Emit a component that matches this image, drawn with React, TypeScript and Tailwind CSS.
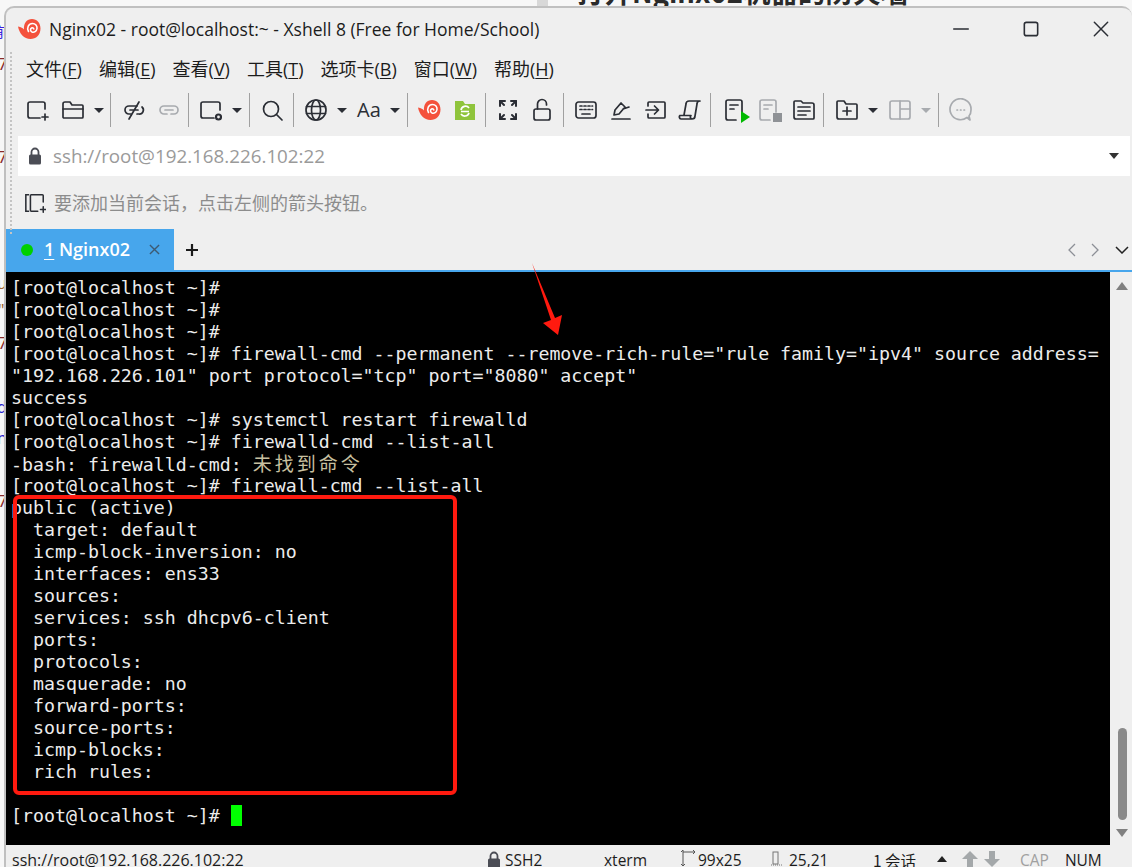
import type { ReactNode } from 'react';

const ui = "font-['Open_Sans','Noto_Sans_CJK_SC',sans-serif]";

const lines: ReactNode[] = [
  '[root@localhost ~]#',
  '[root@localhost ~]#',
  '[root@localhost ~]#',
  '[root@localhost ~]# firewall-cmd --permanent --remove-rich-rule="rule family="ipv4" source address=',
  '"192.168.226.101" port protocol="tcp" port="8080" accept"',
  'success',
  '[root@localhost ~]# systemctl restart firewalld',
  '[root@localhost ~]# firewalld-cmd --list-all',
  <>
    -bash: firewalld-cmd:{' '}
    <span className="font-['Noto_Sans_CJK_SC',monospace] text-[19px] leading-[20px] tracking-[3px] text-[#c8c0a0]">未找到命令</span>
  </>,
  '[root@localhost ~]# firewall-cmd --list-all',
  'public (active)',
  '  target: default',
  '  icmp-block-inversion: no',
  '  interfaces: ens33',
  '  sources:',
  '  services: ssh dhcpv6-client',
  '  ports:',
  '  protocols:',
  '  masquerade: no',
  '  forward-ports:',
  '  source-ports:',
  '  icmp-blocks:',
  '  rich rules:',
  ' ',
  <>
    [root@localhost ~]# <span className="inline-block h-[21px] w-[11px] align-top bg-[#00ff00]" />
  </>,
];

function Svg({ className = '', children, dim }: { className?: string; children: ReactNode; dim?: boolean }) {
  return (
    <svg
      viewBox="0 0 24 24"
      fill="none"
      stroke={dim ? '#a8abaf' : '#2b2e35'}
      strokeWidth="1.7"
      strokeLinecap="round"
      strokeLinejoin="round"
      className={`h-6 w-6 shrink-0 ${className}`}
    >
      {children}
    </svg>
  );
}

function Sep({ className = '' }: { className?: string }) {
  return <div className={`h-[34px] w-px shrink-0 bg-[#a0a0a0] ${className}`} />;
}

function Drop({ className = '', dim }: { className?: string; dim?: boolean }) {
  return (
    <div
      className={`h-0 w-0 shrink-0 border-x-[5px] border-t-[5px] border-x-transparent ${dim ? 'border-t-[#a8abaf]' : 'border-t-[#2b2e35]'} ${className}`}
    />
  );
}

function XshellLogo({ className = '' }: { className?: string }) {
  return (
    <svg viewBox="0 0 24 24" className={`h-6 w-6 shrink-0 ${className}`}>
      <path d="M1 9.5C4 10 6 11 7 12.5 6.500 6 10 2 15 2c5 0 8.500 4 8.500 9.500C23.500 18 19 22 13.500 22 7 22 2.500 17 1 9.500Z" fill="#f4513c" />
      <path d="M11.500 14.500C9.500 11 11.500 6.500 15.500 6.500c3 0 4.800 2.500 4.500 5-.4 3-3 4.300-5 3.500-1.800-.8-2-3.200-.5-4 1-.5 2.200 0 2.300 1" fill="none" stroke="#fff" strokeWidth="1.600" strokeLinecap="round" />
    </svg>
  );
}

function StatusLock({ className = '' }: { className?: string }) {
  return (
    <svg viewBox="0 0 14 18" className={`h-[18px] w-[14px] shrink-0 ${className}`}>
      <path d="M3.500 8V5a3.500 3.500 0 0 1 7 0v3" fill="none" stroke="#4b4d55" strokeWidth="1.800" />
      <rect x="1" y="7.500" width="12" height="10" rx="1.500" fill="#4b4d55" />
    </svg>
  );
}

function Menu({ label, letter, className = '' }: { label: string; letter: string; className?: string }) {
  return (
    <span className={className}>
      {label}(<span className="underline underline-offset-2">{letter}</span>)
    </span>
  );
}

function Toolbar() {
  return (
    <div className="mt-[2px] flex h-[40px] items-center pl-[19px]">
      <Svg>
        <path d="M20 11V6a2 2 0 0 0-2-2H5a2 2 0 0 0-2 2v12a2 2 0 0 0 2 2h10" />
        <path d="M20 16v6M17 19h6" />
      </Svg>
      <Svg className="ml-[12px]">
        <path d="M2 19V6a2 2 0 0 1 2-2h5l2 3h10a1 1 0 0 1 1 1v11a1 1 0 0 1-1 1H3a1 1 0 0 1-1-1Z" />
        <path d="M2 11h20" />
      </Svg>
      <Drop className="ml-[9px]" />
      <Sep className="ml-[6px]" />
      <Svg className="ml-[11px]">
        <path d="M9 16H7a4 4 0 0 1 0-8h8M15 16h2a4 4 0 0 0 3-7" />
        <path d="M8 12h8M17 4 7 21" />
      </Svg>
      <Svg dim className="ml-[11px]">
        <path d="M10 16H7a4 4 0 0 1 0-8h10a4 4 0 0 1 0 8h-3" />
        <path d="M8 12h8" />
      </Svg>
      <Sep className="ml-[7px]" />
      <Svg className="ml-[10px]">
        <path d="M21 12V6a2 2 0 0 0-2-2H4a2 2 0 0 0-2 2v12a2 2 0 0 0 2 2h11" />
        <circle cx="19.500" cy="19" r="2.500" strokeWidth="2.200" />
      </Svg>
      <Drop className="ml-[9px]" />
      <Sep className="ml-[7px]" />
      <Svg className="ml-[10px]">
        <circle cx="11" cy="11" r="7.500" />
        <path d="m17 17 5 5" />
      </Svg>
      <Sep className="ml-[9px]" />
      <Svg className="ml-[10px]">
        <circle cx="12" cy="12" r="10" />
        <ellipse cx="12" cy="12" rx="4.500" ry="10" />
        <path d="M2.500 8.500h19M2.500 15.500h19" />
      </Svg>
      <Drop className="ml-[9px]" />
      <span className={`ml-[10px] w-6 text-[20px] leading-none whitespace-nowrap text-[#2b2e35] ${ui}`}>Aa</span>
      <Drop className="ml-[9px]" />
      <Sep className="ml-[7px]" />
      <XshellLogo className="ml-[9px]" />
      <svg viewBox="0 0 24 24" className="ml-[12px] h-6 w-6 shrink-0">
        <path d="M2 3h8l2 3h10v16H2Z" fill="#8fc43c" />
        <path d="M8 12a4.500 4.500 0 0 1 8-2M16 15a4.500 4.500 0 0 1-8 1M8 13.500h8" fill="none" stroke="#fff" strokeWidth="1.700" />
      </svg>
      <Sep className="ml-[8px]" />
      <Svg className="ml-[10px]">
        <path d="M4 8V3h5M20 8V3h-5M4 16v5h5M20 16v5h-5" strokeWidth="2" />
        <path d="m4 3 4 4M20 3l-4 4M4 21l4-4M20 21l-4-4" strokeWidth="2" />
      </Svg>
      <Svg className="ml-[10px]">
        <rect x="4" y="11" width="16" height="11" rx="2" />
        <path d="M7.500 11V6a4.500 4.500 0 0 1 9 0v1" />
      </Svg>
      <Sep className="ml-[9px]" />
      <Svg className="ml-[10px]">
        <rect x="2" y="4" width="20" height="16" rx="2.500" />
        <path d="M6 8h2M10 8h2M14 8h2M18 8h.5M6 11.500h2M10 11.500h2M14 11.500h2M18 11.500h.5M8 16h8" />
      </Svg>
      <Svg className="ml-[11px]">
        <path d="M3 21h18" />
        <path d="m5 17 1-5 6-7 4 4-6 7ZM14 11l6-2" />
      </Svg>
      <Svg className="ml-[11px]">
        <path d="M4 8V5a1 1 0 0 1 1-1h15a1 1 0 0 1 1 1v14a1 1 0 0 1-1 1H5a1 1 0 0 1-1-1v-3" />
        <path d="M2 12h12M10.500 8l4 4-4 4" />
      </Svg>
      <Svg className="ml-[10px]">
        <path d="M6 17 8 6a3 3 0 0 1 3-3h11a3 3 0 0 0-3 3l-2 12a3 3 0 0 1-3 3H3a2 2 0 0 1-1-3.500h11a2 2 0 0 0 1 3.500" />
      </Svg>
      <Sep className="ml-[8px]" />
      <div className="relative ml-[12px] h-6 w-6 shrink-0">
        <Svg>
          <path d="M13 22H5a2 2 0 0 1-2-2V4a2 2 0 0 1 2-2h12a2 2 0 0 1 2 2v10" />
          <path d="M7 7h8M7 11h4" />
        </Svg>
        <div className="absolute right-[-3px] bottom-[-1px] h-0 w-0 border-y-[6px] border-l-[9px] border-y-transparent border-l-[#00b900]" />
      </div>
      <div className="relative ml-[10px] h-6 w-6 shrink-0">
        <Svg dim>
          <path d="M13 22H5a2 2 0 0 1-2-2V4a2 2 0 0 1 2-2h12a2 2 0 0 1 2 2v10" />
          <path d="M7 7h8M7 11h4" />
        </Svg>
        <div className="absolute right-[-1px] bottom-0 h-[9px] w-[9px] bg-[#8f9296]" />
      </div>
      <Svg className="ml-[11px]">
        <path d="M2 19V4a1 1 0 0 1 1-1h6l2 2h9a2 2 0 0 1 2 2v13a1 1 0 0 1-1 1H4a2 2 0 0 1-2-2Z" />
        <path d="M6 9h12M6 13h12M6 17h8" />
      </Svg>
      <Sep className="ml-[7px]" />
      <Svg className="ml-[11px]">
        <path d="M2 19V4a1 1 0 0 1 1-1h6l2 3h10a1 1 0 0 1 1 1v13a1 1 0 0 1-1 1H4a2 2 0 0 1-2-2Z" />
        <path d="M12 9v8M8 13h8" />
      </Svg>
      <Drop className="ml-[9px]" />
      <Svg dim className="ml-[10px]">
        <rect x="2" y="3" width="20" height="18" rx="2" />
        <path d="M12 3v18M12 11h10" />
      </Svg>
      <Drop dim className="ml-[9px]" />
      <Sep className="ml-[7px]" />
      <Svg dim className="ml-[10px]">
        <path d="M21 22l-3-2.500A10.500 10.500 0 1 1 22 12c0 3-1 5-2 6Z" />
        <path d="M8 12h.5M11.500 12h.5M15 12h.5" />
      </Svg>
    </div>
  );
}

export default function App() {
  return (
    <div className="relative h-[867px] w-[1132px] overflow-hidden bg-[#f7f7f7]">
      {/* stuff showing behind the window */}
      <div className="absolute top-[-23px] left-[577px] font-['Noto_Sans_CJK_SC',sans-serif] text-[27.500px] leading-[28px] font-bold whitespace-nowrap text-[#2a2a2a]">
        打开Nginx02机器的防火墙
      </div>
      <div className="absolute top-0 left-[537px] h-[6px] w-[11px] bg-[#d8d8d8]" />
      <span className="absolute top-[21px] left-[-5px] font-['Noto_Sans_CJK_SC',sans-serif] text-[15px] leading-[20px] text-[#3a1fe0]">前</span>
      <span className="absolute top-[54px] left-[-2px] text-[16px] leading-[20px] text-[#8a2a2a]">7</span>
      <span className="absolute top-[147px] left-[-2px] text-[16px] leading-[20px] text-[#8a2a2a]">7</span>
      <span className="absolute top-[273px] left-[-3px] text-[16px] leading-[20px] text-[#a0622a]">u</span>
      <span className="absolute top-[300px] left-[-2px] text-[16px] leading-[20px] text-[#a0622a]">"</span>
      <span className="absolute top-[333px] left-[-2px] text-[16px] leading-[20px] text-[#8a2a2a]">7</span>
      <span className="absolute top-[397px] left-[-3px] text-[16px] leading-[20px] text-[#2a1fd0]">d</span>
      <span className="absolute top-[428px] left-[-3px] text-[16px] leading-[20px] text-[#2a1fd0]">n</span>
      <span className="absolute top-[491px] left-[-2px] text-[16px] leading-[20px] text-[#8a2a2a]">7</span>

      <div className="relative mt-[6px] ml-[4px] flex h-[861px] flex-col overflow-hidden rounded-t-[10px] border-t-[2px] border-l-[2px] border-[#c0c0c0] bg-[#efefef]">
        <div className="absolute top-[44px] left-[4px] h-[182px] border-l-[2px] border-dotted border-[#c4c4c4]" />

        {/* title bar */}
        <div className="flex h-[42px] shrink-0 items-center pr-[23px] pl-[11px]">
          <XshellLogo />
          <span className={`ml-[8px] text-[17.500px] whitespace-nowrap text-[#1c1c1c] ${ui}`}>
            Nginx02 - root@localhost:~ - Xshell 8 (Free for Home/School)
          </span>
          <div className="ml-auto flex items-center gap-[54px]">
            <Svg className="h-[16px] w-[16px]"><path d="M1 12h22" strokeWidth="2" /></Svg>
            <Svg className="h-[16px] w-[16px]"><rect x="2" y="2" width="20" height="20" rx="3" strokeWidth="2.400" /></Svg>
            <Svg className="h-[16px] w-[16px]"><path d="m2 2 20 20M22 2 2 22" strokeWidth="2.200" /></Svg>
          </div>
        </div>

        {/* menu */}
        <div className={`flex h-[38px] shrink-0 items-center pl-[20px] text-[18px] whitespace-nowrap text-[#1c1c1c] ${ui}`}>
          <Menu label="文件" letter="F" />
          <Menu label="编辑" letter="E" className="ml-[17px]" />
          <Menu label="查看" letter="V" className="ml-[17px]" />
          <Menu label="工具" letter="T" className="ml-[17px]" />
          <Menu label="选项卡" letter="B" className="ml-[17px]" />
          <Menu label="窗口" letter="W" className="ml-[17px]" />
          <Menu label="帮助" letter="H" className="ml-[17px]" />
        </div>

        <Toolbar />

        {/* address bar */}
        <div className="mt-[6px] mr-[2px] ml-[12px] flex h-[40px] shrink-0 items-center bg-white pr-[11px] pl-[10px]">
          <StatusLock />
          <span className={`ml-[11px] text-[18.800px] text-[#9a9a9a] ${ui}`}>ssh://root@192.168.226.102:22</span>
          <div className="ml-auto h-0 w-0 border-x-[5.500px] border-t-[6px] border-x-transparent border-t-[#333]" />
        </div>

        {/* hint */}
        <div className="flex h-[53px] shrink-0 items-center pl-[18px]">
          <svg viewBox="0 0 24 24" fill="none" stroke="#2b2e35" strokeWidth="1.700" strokeLinecap="round" className="h-[22px] w-[22px] shrink-0">
            <path d="M5 3H2v18h3M21 11V4a1 1 0 0 0-1-1H8a1 1 0 0 0-1 1v16a1 1 0 0 0 1 1h7M21 16v6M18 19h6" />
          </svg>
          <span className="ml-[8px] font-['Noto_Sans_CJK_SC',sans-serif] text-[18px] whitespace-nowrap text-[#8c8c8c]">
            要添加当前会话，点击左侧的箭头按钮。
          </span>
        </div>

        {/* tabs */}
        <div className="flex h-[41px] shrink-0 items-center">
          <div className={`flex h-full w-[168px] items-center bg-[#47a6ec] pl-[15px] ${ui}`}>
            <div className="h-3 w-3 rounded-full bg-[#00d000]" />
            <span className="ml-[11px] text-[18px] font-semibold whitespace-nowrap text-white">
              <span className="underline underline-offset-3">1</span> Nginx02
            </span>
            <svg viewBox="0 0 12 12" className="ml-[19px] h-[11px] w-[11px]" fill="none" stroke="#3d5a73" strokeWidth="1.500">
              <path d="m1 1 10 10M11 1 1 11" />
            </svg>
          </div>
          <svg viewBox="0 0 12 12" className="ml-[12px] h-3 w-3" fill="none" stroke="#1a1a1a" strokeWidth="2.200">
            <path d="M6 0v12M0 6h12" />
          </svg>
          <div className="ml-auto flex items-center pr-[3px]">
            <svg viewBox="0 0 10 14" className="h-[14px] w-[10px]" fill="none" stroke="#8c8f96" strokeWidth="1.300"><path d="M8 1 2 7l6 6" /></svg>
            <svg viewBox="0 0 10 14" className="ml-[13px] h-[14px] w-[10px]" fill="none" stroke="#8c8f96" strokeWidth="1.300"><path d="m2 1 6 6-6 6" /></svg>
            <svg viewBox="0 0 14 8" className="ml-[15px] h-[8px] w-[14px]" fill="none" stroke="#222" strokeWidth="1.500"><path d="m1 1 6 6 6-6" /></svg>
          </div>
        </div>
        <div className="h-[2px] shrink-0 bg-[#47a6ec]" />

        {/* terminal + scrollbar */}
        <div className="flex h-[573px] shrink-0">
          <div className="h-full w-[1104px] overflow-hidden bg-black pt-[5px] pl-[5px] font-['DejaVu_Sans_Mono',monospace] text-[18.250px] leading-[22px] text-[#ececec]">
            {lines.map((line, i) => (
              <div key={i} className="h-[22px] whitespace-pre">{line}</div>
            ))}
          </div>
          <div className="flex flex-1 flex-col items-center pl-[2px]">
            <div className="mt-[10px] h-0 w-0 border-x-[6px] border-b-[8px] border-x-transparent border-b-[#808080]" />
            <div className="mt-auto h-[92px] w-[9px] rounded-full bg-[#8a8a8a]" />
            <div className="mt-[9px] mb-[8px] h-0 w-0 border-x-[6px] border-t-[8px] border-x-transparent border-t-[#808080]" />
          </div>
        </div>

        {/* status bar */}
        <div className={`relative flex h-[22px] shrink-0 items-start pt-[4px] pl-[6px] text-[15.500px] leading-[22px] whitespace-nowrap text-[#1c1c1c] ${ui}`}>
          <span className="w-[475px] text-[16px]">ssh://root@192.168.226.102:22</span>
          <StatusLock className="mt-[2px] h-[16px]" />
          <span className="ml-[4px] w-[99px]">SSH2</span>
          <span className="w-[75px]">xterm</span>
          <svg viewBox="0 0 16 16" className="mt-[1px] h-4 w-4 shrink-0" fill="none" stroke="#555" strokeWidth="1"><path d="M4 0v16M2 14l2 2 2-2M2 2l2-2M4 2h12M14 0l2 2-2 2" /></svg>
          <span className="ml-[3px] w-[72px]">99x25</span>
          <svg viewBox="0 0 14 16" className="mt-[1px] h-4 w-[14px] shrink-0" fill="none" stroke="#777" strokeWidth="1"><rect x="3" y="2" width="5" height="12" /><path d="M1 15h12" strokeDasharray="1 1" /></svg>
          <span className="ml-[5px] w-[84px]">25,21</span>
          <span className="w-[64px] font-['Noto_Sans_CJK_SC',sans-serif]">1 会话</span>
          <div className="mt-[7px] h-0 w-0 border-x-[5px] border-b-[6px] border-x-transparent border-b-[#222]" />
          <svg viewBox="0 0 16 16" className="mt-[2px] ml-[15px] h-4 w-4 shrink-0" fill="#a4a8aa"><path d="M8 0 16 8h-5v8H5V8H0Z" /></svg>
          <svg viewBox="0 0 16 16" className="mt-[2px] ml-[6px] h-4 w-4 shrink-0" fill="#a4a8aa"><path d="M8 16 16 8h-5V0H5v8H0Z" /></svg>
          <span className="ml-[20px] text-[#a0a0a0]">CAP</span>
          <span className="ml-[16px]">NUM</span>
        </div>

        {/* red annotations from the screenshot */}
        <div className="pointer-events-none absolute top-[487px] left-[7px] h-[300px] w-[444px] rounded-[6px] border-[4px] border-[#ff1a0f]" />
        <svg viewBox="0 0 60 80" className="pointer-events-none absolute top-[255px] left-[526px] h-[80px] w-[60px]">
          <polygon points="0,0 23,55 30,52 26,72 11,60 19,57" fill="#ff1a0f" />
        </svg>
      </div>
    </div>
  );
}
